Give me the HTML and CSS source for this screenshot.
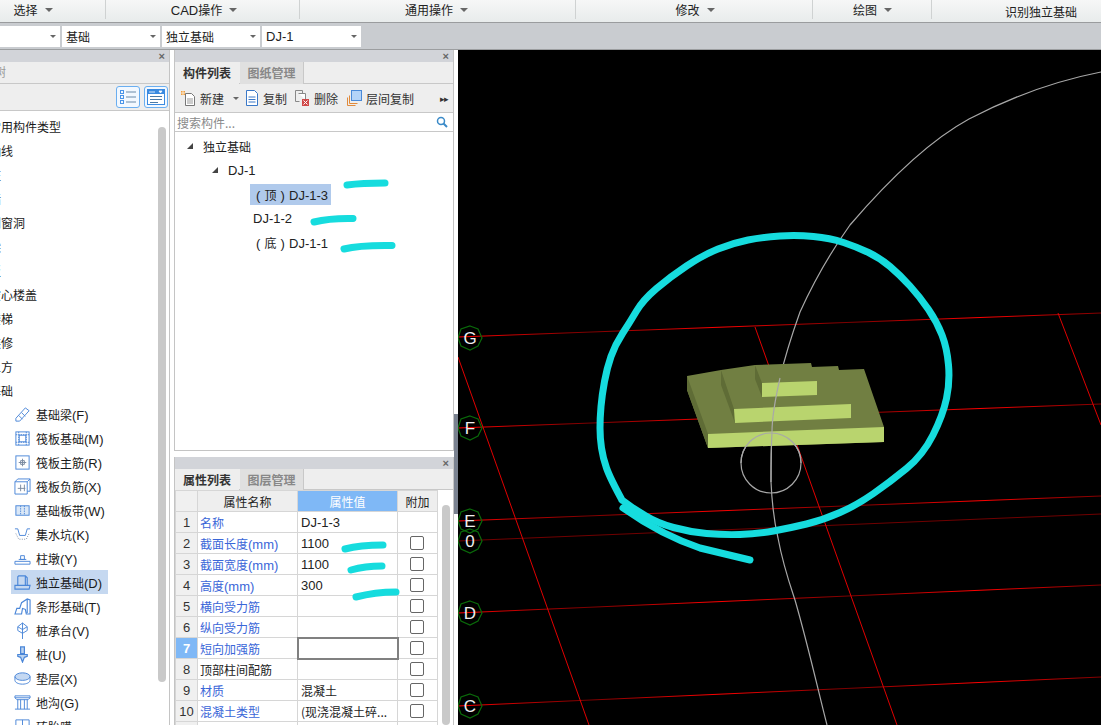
FILE: index.html
```html
<!DOCTYPE html>
<html lang="zh">
<head>
<meta charset="utf-8">
<title>独立基础</title>
<link rel="stylesheet" href="styles.css">
</head>
<body>
<div class="app">
  <header class="menubar">
    <div class="menu m1"><span>选择</span><i class="caret"></i></div>
    <div class="menu m2"><span><b class="lat">CAD</b>操作</span><i class="caret"></i></div>
    <div class="menu m3"><span>通用操作</span><i class="caret"></i></div>
    <div class="menu m4"><span>修改</span><i class="caret"></i></div>
    <div class="menu m5"><span>绘图</span><i class="caret"></i></div>
    <div class="menu m6"><span>识别独立基础</span></div>
  </header>
  <div class="selectbar">
    <div class="select s0"><i class="caret small"></i></div>
    <div class="select"><span>基础</span><i class="caret small"></i></div>
    <div class="select"><span>独立基础</span><i class="caret small"></i></div>
    <div class="select"><span class="lat">DJ-1</span><i class="caret small"></i></div>
  </div>
  <main class="main">
    <aside class="panel left">
      <div class="titlebar"><span class="close">×</span></div>
      <div class="lefttabs"><span class="lefttab">导航树</span></div>
      <div class="lefttools">
        <button class="iconbtn"><svg width="18" height="16" viewBox="0 0 18 16"><g fill="none" stroke="#4a94e8"><rect x="1.5" y="1.5" width="3" height="3"/><rect x="1.5" y="6.5" width="3" height="3"/><rect x="1.5" y="11.5" width="3" height="3"/><path d="M7 3h10M7 8h10M7 13h10" stroke="#6a8aa8"/></g></svg></button>
        <button class="iconbtn"><svg width="18" height="16" viewBox="0 0 18 16"><rect x=".5" y=".5" width="17" height="15" fill="#fff" stroke="#3a8ae0"/><rect x="1" y="1" width="16" height="4" fill="#3a8ae0"/><path d="M3 7.500h12M3 10.500h12M3 13.500h8" stroke="#4a7aa8"/><path d="M3 2v2M5 2v2M7 2v2M12 2h3l-1.500 2z" stroke="#fff" fill="#fff" stroke-width=".8"/></svg></button>
      </div>
      <div class="leftbody">
        <ul class="navtree">
          <li class="nav plain">常用构件类型</li>
          <li class="nav plain">轴线</li>
          <li class="nav plain">柱</li>
          <li class="nav plain">墙</li>
          <li class="nav plain">门窗洞</li>
          <li class="nav plain">梁</li>
          <li class="nav plain">板</li>
          <li class="nav plain">空心楼盖</li>
          <li class="nav plain">楼梯</li>
          <li class="nav plain">装修</li>
          <li class="nav plain">土方</li>
          <li class="nav plain">基础</li>
          <li class="nav item"><svg class="ic" viewBox="0 0 18 18"><path d="M2 13 12 2l4 3L6 16H2zM5 10l4 4M8 7l4 4" /></svg><span>基础梁<b class="lat">(F)</b></span></li>
          <li class="nav item"><svg class="ic" viewBox="0 0 18 18"><rect x="2" y="2" width="14" height="14"/><rect x="5.500" y="5.500" width="7" height="7"/><path d="M2 5h14M2 13h14M5 2v14M13 2v14" stroke-dasharray="1.500 1"/></svg><span>筏板基础<b class="lat">(M)</b></span></li>
          <li class="nav item"><svg class="ic" viewBox="0 0 18 18"><rect x="2" y="2" width="14" height="14"/><path class="g" d="M9 5v8M5 9h8M7 7h4v4H7z"/></svg><span>筏板主筋<b class="lat">(R)</b></span></li>
          <li class="nav item"><svg class="ic" viewBox="0 0 18 18"><path d="M4 1h13v13h-3M1 4h13v13H1zM1 4l3-3M14 4l3-3"/><path class="g" d="M7 7v7M11 7v7M4 11h8"/></svg><span>筏板负筋<b class="lat">(X)</b></span></li>
          <li class="nav item"><svg class="ic" viewBox="0 0 18 18"><rect x="2" y="4" width="14" height="10" fill="#dbe8f7"/><path d="M7 4v10M11 4v10" stroke-dasharray="1.500 1"/></svg><span>基础板带<b class="lat">(W)</b></span></li>
          <li class="nav item"><svg class="ic" viewBox="0 0 18 18"><path d="M1 3h3l2 7h6l2-7h3"/><path class="g" d="M2 8l3 6h8l3-6" stroke-dasharray="1 1.500"/></svg><span>集水坑<b class="lat">(K)</b></span></li>
          <li class="nav item"><svg class="ic" viewBox="0 0 18 18"><path d="M7 6h4v4H7zM5 10h8M1 12h16v3H1z"/></svg><span>柱墩<b class="lat">(Y)</b></span></li>
          <li class="nav item active"><svg class="ic" viewBox="0 0 18 18"><path d="M5 2h7l2 2v8H4V3zM12 2v10M1 12h16l-1 4H1z" stroke-width="1.200"/></svg><span>独立基础<b class="lat">(D)</b></span></li>
          <li class="nav item"><svg class="ic" viewBox="0 0 18 18"><path d="M1 17l2-6h3l2-6 6-4 3 1v15h-4l-1-5-3-1-1 6zM14 1v15" stroke-width="1.200"/></svg><span>条形基础<b class="lat">(T)</b></span></li>
          <li class="nav item"><svg class="ic" viewBox="0 0 18 18"><path d="M9 1l5 4v4l-5 3-5-3V5zM9 1v17M4 5l5 3 5-3"/></svg><span>桩承台<b class="lat">(V)</b></span></li>
          <li class="nav item"><svg class="ic" viewBox="0 0 18 18"><path d="M7 1h4v7H7zM4 9h10v2l-3 1-2 5-2-5-3-1z" fill="#bcd4f0" stroke-width="1.300"/></svg><span>桩<b class="lat">(U)</b></span></li>
          <li class="nav item"><svg class="ic" viewBox="0 0 18 18"><ellipse cx="9" cy="7" rx="8" ry="4" fill="#c4d8f2"/><path d="M1 7v4c0 2 3.500 4 8 4s8-2 8-4V7"/></svg><span>垫层<b class="lat">(X)</b></span></li>
          <li class="nav item"><svg class="ic" viewBox="0 0 18 18"><path d="M1 2h16v2l-2 2H3L1 4zM1 4h16M4 6v10M7 6v10M11 6v10M14 6v10M1 16h16"/></svg><span>地沟<b class="lat">(G)</b></span></li>
          <li class="nav item"><svg class="ic" viewBox="0 0 18 18"><path d="M2 2h14v14H2zM9 2v14M2 9h14"/></svg><span>砖胎膜</span></li>
        </ul>
        <div class="vthumb navthumb"></div>
      </div>
    </aside>

    <section class="midcol">
      <div class="panel comp">
        <div class="titlebar"><span class="close">×</span></div>
        <div class="tabs"><span class="tab on">构件列表</span><span class="tab">图纸管理</span></div>
        <div class="tools">
          <span class="tool t1"><svg width="15" height="15" viewBox="0 0 15 15"><path d="M4.500 2.500h6l3 3v9h-9z" fill="#fff" stroke="#777"/><path d="M6 8h6M6 10h6M6 12h6" stroke="#999"/><path d="M0 0h4v4H0z" fill="#f0a040"/><path d="M2 0v4M0 2h4" stroke="#fff" stroke-width=".7"/></svg>新建<i class="caret tiny"></i></span>
          <span class="tool t2"><svg width="14" height="16" viewBox="0 0 14 16"><path d="M1.500.5h8l3 3v12h-11z" fill="#fff" stroke="#3a78c8"/><path d="M3.500 7h7M3.500 9.500h7M3.500 12h7" stroke="#3a78c8"/></svg>复制</span>
          <span class="tool t3"><svg width="15" height="16" viewBox="0 0 15 16"><path d="M.5.500h7v3M.5.500v11h4" fill="none" stroke="#888"/><path d="M3.500 3.500h7v6" fill="#fff" stroke="#888"/><rect x="7" y="9" width="7" height="7" fill="#d04848"/><path d="M8.500 10.500l4 4M12.500 10.500l-4 4" stroke="#fff"/></svg>删除</span>
          <span class="tool t4"><svg width="15" height="16" viewBox="0 0 15 16"><path d="M.5 7.500v8h8M2.500 5.500v8h8" fill="none" stroke="#e08a3c"/><rect x="4.500" y=".5" width="10" height="10" fill="#b4d4f8" stroke="#4a8ad8"/></svg>层间复制</span>
          <span class="more">▸▸</span>
        </div>
        <div class="search"><span>搜索构件...</span><svg width="12" height="12" viewBox="0 0 12 12"><circle cx="5" cy="5" r="3.500" fill="none" stroke="#3a8ac8" stroke-width="1.500"/><path d="M7.500 7.500 11 11" stroke="#3a8ac8" stroke-width="2"/></svg></div>
        <div class="comptree">
          <div class="node n1"><i class="tri"></i><span>独立基础</span></div>
          <div class="node n2"><i class="tri"></i><span class="lat">DJ-1</span></div>
          <div class="node n3 sel"><span><b class="lat">( </b>顶<b class="lat"> ) DJ-1-3</b></span></div>
          <div class="node n4"><span class="lat">DJ-1-2</span></div>
          <div class="node n3"><span><b class="lat">( </b>底<b class="lat"> ) DJ-1-1</b></span></div>
        </div>
      </div>
      <div class="panel props">
        <div class="titlebar"><span class="close">×</span></div>
        <div class="tabs"><span class="tab on">属性列表</span><span class="tab">图层管理</span></div>
        <div class="propbody">
          <table class="ptable">
            <thead><tr><th class="num"></th><th class="name">属性名称</th><th class="val">属性值</th><th class="add">附加</th></tr></thead>
            <tbody>
              <tr><td class="num">1</td><td class="pn">名称</td><td class="pv lat">DJ-1-3</td><td></td></tr>
              <tr><td class="num">2</td><td class="pn">截面长度<b class="lat">(mm)</b></td><td class="pv lat">1100</td><td class="cb"><i></i></td></tr>
              <tr><td class="num">3</td><td class="pn">截面宽度<b class="lat">(mm)</b></td><td class="pv lat">1100</td><td class="cb"><i></i></td></tr>
              <tr><td class="num">4</td><td class="pn">高度<b class="lat">(mm)</b></td><td class="pv lat">300</td><td class="cb"><i></i></td></tr>
              <tr><td class="num">5</td><td class="pn">横向受力筋</td><td class="pv"></td><td class="cb"><i></i></td></tr>
              <tr><td class="num">6</td><td class="pn">纵向受力筋</td><td class="pv"></td><td class="cb"><i></i></td></tr>
              <tr><td class="num cur">7</td><td class="pn">短向加强筋</td><td class="pv edit"></td><td class="cb"><i></i></td></tr>
              <tr><td class="num">8</td><td class="pk">顶部柱间配筋</td><td class="pv"></td><td class="cb"><i></i></td></tr>
              <tr><td class="num">9</td><td class="pn">材质</td><td class="pv">混凝土</td><td class="cb"><i></i></td></tr>
              <tr><td class="num">10</td><td class="pn">混凝土类型</td><td class="pv">(现浇混凝土碎...</td><td class="cb"><i></i></td></tr>
              <tr><td class="num"></td><td></td><td></td><td></td></tr>
            </tbody>
          </table>
          <div class="proptrack"><div class="vthumb"></div></div>
        </div>
      </div>
    </section>

    <div class="splitter"><div class="grip"></div></div>

    <div class="canvas">
      <svg class="scene" viewBox="458 50 643 675" width="643" height="675">
        <defs>
          <linearGradient id="redfade" gradientUnits="userSpaceOnUse" x1="458" y1="0" x2="588" y2="0" spreadMethod="reflect">
            <stop offset="0" stop-color="#ff0000"/>
            <stop offset="1" stop-color="#7a0000"/>
          </linearGradient>
        </defs>
        <g class="gridlines">
          <path class="h" d="M458 337 1101 313"/>
          <path class="h" d="M458 428 1101 404"/>
          <path class="h" d="M458 521 1101 496"/>
          <path class="dim" d="M458 541 1101 514"/>
          <path class="h" d="M458 613 1101 585"/>
          <path class="h" d="M458 706 1101 677"/>
          <path d="M458 357 589 725"/>
          <path d="M755 327 897 725"/>
          <path d="M1058 313 1101 425"/>
        </g>
        <g class="arcs">
          <path d="M1101 72C1060 80 1015 95 969 119 925 143 880 190 850 225 825 260 810 290 800 312 790 340 783 365 780 378 775 400 772 420 772 432 771 450 771 465 771 482 772 505 775 525 778 538 783 565 790 585 795 600 808 645 818 690 827 725"/>
          <circle cx="771" cy="463" r="30"/>
        </g>
        <g class="footing">
          <path class="top" d="M687 376 721 370 755 365 811 363 812 367 838 366 839 370 864 369 884 427 884 442 708 448 687 390z"/>
          <path class="side" d="M687 376 708 434 708 448 687 390z"/>
          <path class="side" d="M721 370 734 409 735 423 721 385z"/>
          <path class="side" d="M755 365 762 383 762 397 755 379z"/>
          <path class="lite" d="M708 434 884 427 884 442 708 448z"/>
          <path class="lite" d="M734 409 851 404 851 418 735 423z"/>
          <path class="lite" d="M762 383 817 381 817 395 762 397z"/>
          <path class="arcfront" d="M780 378C775 400 772 420 772 432 771 450 771 465 771 482"/>
          <path class="arcfront" d="M741 463A30 30 0 0 1 801 463"/>
        </g>
        <g class="axes">
          <g><path d="M470 326 478 329 482 338 478 346 470 350 461 346 458 338 461 329z"/><text x="470" y="344">G</text></g>
          <g><path d="M470 416 478 419 482 428 478 436 470 440 461 436 458 428 461 419z"/><text x="470" y="434">F</text></g>
          <g><path d="M470 509 478 512 482 521 478 529 470 533 461 529 458 521 461 512z"/><text x="470" y="527">E</text></g>
          <g><path d="M470 529 478 532 482 541 478 549 470 553 461 549 458 541 461 532z"/><text x="470" y="547">0</text></g>
          <g><path d="M470 601 478 604 482 613 478 621 470 625 461 621 458 613 461 604z"/><text x="470" y="619">D</text></g>
          <g><path d="M470 694 478 697 482 706 478 714 470 718 461 714 458 706 461 697z"/><text x="470" y="712">C</text></g>
        </g>
      </svg>
    </div>
  </main>
  <svg class="ink" viewBox="0 0 1101 725" width="1101" height="725">
    <path d="M347 185Q362 183 385 183"/>
    <path d="M314 222Q330 218 353 218.500"/>
    <path d="M344 249Q360 245 392 245.500"/>
    <path d="M345 549Q360 545 383 545"/>
    <path d="M351 570Q365 566 382 566"/>
    <path d="M356 597Q375 592 396 592"/>
    <path d="M623 508C640 520 670 538 700 548L750 560"/>
    <path d="M622 500Q610 478 606.500 468 603 458 601.500 448 600 438 600 428 600 418 601 406.500 602 395 604.500 381.500 607 368 611 356.500 615 345 622.500 333.500 630 322 636.500 311 643 300 656.500 288.500 670 277 686.500 266 703 255 718 249 733 243 748 240 763 237 780 236 797 235 813.500 236.500 830 238 843.500 242.500 857 247 868.500 252.500 880 258 890 266.500 900 275 910 286 920 297 928.500 309.500 937 322 942 335 947 348 948.500 365 950 382 946.500 398.500 943 415 933 435 923 455 906.500 468.500 890 482 873.500 493.500 857 505 840 512.500 823 520 806.500 524 790 528 773.500 531 757 534 740 534.500 723 535 706.500 533.500 690 532 673.500 527.500 657 523 645 515.500L633 508 622 500"/>
  </svg>
</div>
</body>
</html>
```
FILE: styles.css
```css
* { box-sizing: border-box; }
html, body { margin: 0; padding: 0; background: #fff; }
body { font: 12px "Noto Sans CJK SC", "Liberation Sans", sans-serif; color: #222; }
.lat { font: 13px "Liberation Sans", "Noto Sans CJK SC", sans-serif; }
.app { position: relative; width: 1101px; height: 725px; overflow: hidden; display: flex; flex-direction: column; }

.menubar { height: 23px; flex: none; display: flex; background: linear-gradient(#f6f7f7, #e8ecec); border-bottom: 1px solid #9a9c9e; }
.menu { display: flex; align-items: center; justify-content: center; gap: 6px; height: 19px; border-right: 1px solid #cfd2d2; flex: none; }
.m1 { width: 145px; margin-left: -39px; }
.m2 { width: 194px; padding-left: 3px; }
.m3 { width: 276px; padding-right: 2px; }
.m4 { width: 237px; padding-left: 2px; }
.m5 { width: 119px; padding-left: 1px; }
.m6 { width: 222px; border: 0; height: 23px; padding-right: 4px; }
.caret { width: 0; height: 0; border: 4px solid transparent; border-top: 4px solid #666; border-bottom: 0; margin-left: 1px; }
.caret.small { border-width: 3px 3.500px 0; margin: 0; }
.caret.tiny { border-width: 3px 3px 0; margin-left: 5px; }
.menu b, .node b, .pn b { font-weight: 400; }

.selectbar { height: 27px; flex: none; display: flex; gap: 2px; padding-top: 3px; background: #c9ccd0; border-bottom: 1px solid #9c9ea0; }
.select { width: 98px; height: 21px; background: #fff; display: flex; align-items: center; justify-content: space-between; padding: 0 4px; }
.select.s0 { width: 60px; justify-content: flex-end; }
.select:last-child { width: 99px; }

.main { flex: 1; display: flex; min-height: 0; background: #fff; }
.panel { display: flex; flex-direction: column; background: #eee; overflow: hidden; }
.titlebar { height: 12px; flex: none; background: #d2d4d9; display: flex; justify-content: flex-end; align-items: center; padding-right: 4px; }
.close { color: #666; font: 700 11px/12px "Liberation Sans", sans-serif; }

.left { width: 170px; flex: none; border-right: 1px solid #c4c4c4; }
.lefttabs { height: 22px; flex: none; border-bottom: 1px solid #c8c8c8; overflow: hidden; color: #999; }
.lefttab { display: block; margin-left: -30px; line-height: 20px; }
.lefttools { height: 27px; flex: none; display: flex; justify-content: flex-end; align-items: center; gap: 4px; padding-right: 1px; border-bottom: 1px solid #c8c8c8; }
.iconbtn { width: 24px; height: 22px; padding: 0; display: flex; align-items: center; justify-content: center; background: #f2f8ff; border: 1px solid #6aaef0; border-radius: 3px; }
.leftbody { flex: 1; position: relative; background: #fff; overflow: hidden; }
.navtree { list-style: none; margin: 0; padding: 3px 0 0; }
.nav { height: 24px; display: flex; align-items: center; white-space: nowrap; color: #1a1a1a; }
.nav.plain { margin-left: -11px; }
.nav.item { margin-left: 11px; width: 97px; padding-left: 3px; gap: 5px; }
.nav.item b { font-weight: 400; }
.nav.active { background: #c5d8f0; }
.ic { width: 17px; height: 17px; flex: none; fill: none; stroke: #4a86d8; stroke-width: 1; }
.ic .g { stroke: #7a8aa0; }
.vthumb { width: 8px; background: #c9c9c9; border-radius: 4px; }
.navthumb { position: absolute; left: 158px; top: 16px; height: 555px; }

.midcol { width: 280px; margin-left: 4px; flex: none; display: flex; flex-direction: column; gap: 5px; }
.comp { height: 401px; flex: none; border-right: 1px solid #c4c4c4; border-left: 1px solid #c4c4c4; border-bottom: 1px solid #c4c4c4; }
.props { flex: 1; min-height: 0; border-right: 1px solid #c4c4c4; border-left: 1px solid #c4c4c4; margin-top: 1px; }
.tabs { height: 22px; flex: none; display: flex; align-items: flex-start; gap: 1px; border-bottom: 1px solid #c8c8c8; }
.props .tabs { height: 21px; }
.tab { width: 64px; height: 22px; line-height: 21px; text-align: center; color: #888; font-weight: 700; background: #e0e0e0; border-right: 1px solid #c8c8c8; }
.tab.on { color: #333; background: #eee; border-right: 0; }
.tools { height: 28px; flex: none; position: relative; display: flex; align-items: center; padding-left: 6px; }
.tool { display: flex; align-items: center; gap: 4px; color: #333; }
.t1 { width: 64px; }
.t2 { width: 50px; }
.t3 { width: 52px; }
.t4 { width: 88px; }
.more { font-size: 9px; letter-spacing: -1px; color: #333; margin-left: 5px; }
.search { height: 20px; flex: none; display: flex; align-items: center; justify-content: space-between; padding: 0 5px 0 2px; background: #fff; border-top: 1px solid #c8c8c8; border-bottom: 1px solid #c8c8c8; color: #8a8a8a; }
.comptree { flex: 1; background: #fff; padding-top: 2px; }
.node { height: 24px; display: flex; align-items: center; white-space: nowrap; color: #222; }
.n1 { padding-left: 12px; gap: 10px; }
.n2 { padding-left: 37px; gap: 10px; }
.n3 { margin-left: 75px; width: 81px; height: 21px; margin-top: 1.500px; margin-bottom: 1.500px; padding-left: 6px; word-spacing: .5px; }
.n4 { padding-left: 78px; }
.sel { background: #b0caec; }
.tri { width: 0; height: 0; border-left: 6px solid transparent; border-bottom: 6px solid #444; }

.propbody { flex: 1; display: flex; min-height: 0; background: #fff; }
.ptable { width: 261px; table-layout: fixed; border-collapse: collapse; flex: none; align-self: flex-start; }
.ptable th, .ptable td { border: 1px solid #d6d6d6; height: 21px; line-height: 19px; padding: 0 0 0 3px; white-space: nowrap; overflow: hidden; font-weight: 400; vertical-align: middle; }
.ptable th { background: #eee; text-align: center; padding: 0; }
.ptable .num { width: 22px; background: #f0f0f0; text-align: center; padding: 0; font: 13px/19px "Liberation Sans", sans-serif; color: #333; }
.ptable th.name { width: 100px; }
.ptable th.val { width: 100px; background: #7fb8f6; color: #fff; }
.ptable th.add { width: 40px; }
.ptable td.pn { color: #3a66d8; padding-left: 2px; }
.ptable td.pk { color: #222; padding-left: 2px; }
.pv { color: #222; }
.ptable td.cur { background: #7fb8f6; color: #fff; font-weight: 700; }
.ptable td.edit { border: 2px solid #808080; }
.ptable td.cb { padding: 0 1px 0 0; text-align: center; }
.cb i { display: block; width: 14px; height: 14px; margin: 0 auto; border: 1px solid #666; border-radius: 2px; background: #fff; }
.proptrack { flex: 1; padding: 15px 0 0 4px; display: flex; background: #fff; }

.splitter { width: 4px; flex: none; position: relative; background: #fff; }
.grip { position: absolute; left: 0; top: 364px; width: 4px; height: 100px; background: #7a8290; }
.canvas { flex: 1; background: #000; overflow: hidden; }
.scene { display: block; }
.gridlines path { stroke: #e00000; stroke-width: 1; fill: none; }
.gridlines .h { stroke: url(#redfade); }
.gridlines .dim { stroke: #700000; }
.arcs path, .arcs circle { fill: none; stroke: #a8a8a8; stroke-width: 1.200; }
.top { fill: #717f42; }
.side { fill: #5f6c36; }
.lite { fill: #b9d46e; }
.arcfront { fill: none; stroke: #a8a8a8; stroke-width: 1.200; }
.axes path { fill: none; stroke: #0a6a0a; stroke-width: 1.200; }
.axes text { fill: #eee; font: 17px "Liberation Sans", sans-serif; text-anchor: middle; }

.ink { position: absolute; left: 0; top: 0; pointer-events: none; }
.ink path { fill: none; stroke: #16dcde; stroke-width: 7; stroke-linecap: round; stroke-linejoin: round; }
```
